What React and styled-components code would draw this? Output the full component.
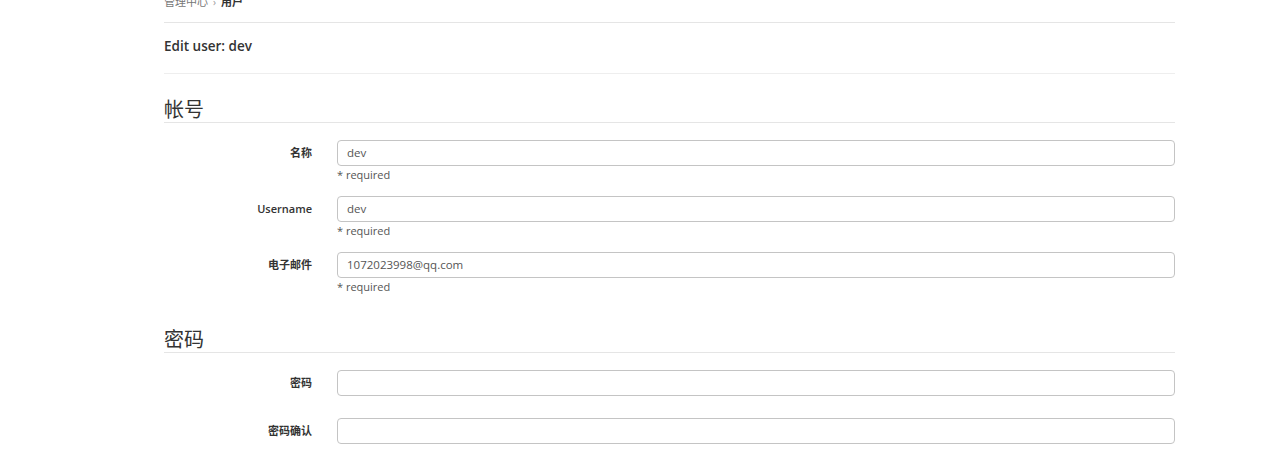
import React from "react";
import styled, { createGlobalStyle } from "styled-components";

const Global = createGlobalStyle`
  html, body { margin: 0; padding: 0; background: #fff; overflow: hidden; }
  body { font-family: "Open Sans", "Noto Sans CJK SC", sans-serif; color: #333; }
`;

const Page = styled.div`
  width: 1011px;
  margin-left: 164px;
`;

const Breadcrumb = styled.div`
  display: flex;
  align-items: center;
  gap: 5px;
  font-size: 11px;
  line-height: 16px;
  margin-top: -6px;
  padding-bottom: 12px;
  border-bottom: 1px solid #e5e5e5;
  color: #777;
`;

const Crumb = styled.span`
  color: ${(p) => (p.$active ? "#333" : "#777")};
  font-weight: ${(p) => (p.$active ? 700 : 400)};
`;

const Sep = styled.span`
  color: #999;
  font-size: 10px;
`;

const Header = styled.div`
  padding: 14px 0 18px;
  font-size: 13.5px;
  font-weight: 600;
  line-height: 18px;
  color: #333;
  border-bottom: 1px solid #eee;
`;

const SectionTitle = styled.h3`
  margin: ${(p) => p.$mt}px 0 0;
  font-size: 20px;
  font-weight: 400;
  line-height: 24px;
  color: #333;
  border-bottom: 1px solid #e5e5e5;
`;

const Form = styled.div`
  display: flex;
  flex-direction: column;
  gap: ${(p) => p.$gap}px;
  padding-top: 17px;
`;

const Row = styled.div`
  display: grid;
  grid-template-columns: 148px 1fr;
  column-gap: 25px;
  align-items: start;
`;

const Label = styled.label`
  text-align: right;
  font-size: 11px;
  font-weight: 600;
  line-height: 26px;
  color: #333;
`;

const Field = styled.div`
  display: flex;
  flex-direction: column;
`;

const Input = styled.div`
  box-sizing: border-box;
  height: 26px;
  border: 1px solid #c4c4c4;
  border-radius: 4px;
  padding: 0 9px;
  font-size: 11.5px;
  line-height: 24px;
  color: #555;
`;

const Help = styled.div`
  margin-top: 1px;
  font-size: 11px;
  line-height: 16px;
  color: #555;
`;

export default function App() {
  const account = [
    { label: "名称", value: "dev" },
    { label: "Username", value: "dev" },
    { label: "电子邮件", value: "1072023998@qq.com" },
  ];
  const pwd = ["密码", "密码确认"];
  return (
    <>
      <Global />
      <Page>
        <Breadcrumb>
          <Crumb>管理中心</Crumb>
          <Sep>›</Sep>
          <Crumb $active>用户</Crumb>
        </Breadcrumb>
        <Header>Edit user: dev</Header>
        <SectionTitle $mt={24}>帐号</SectionTitle>
        <Form $gap={13}>
          {account.map((f) => (
            <Row key={f.label}>
              <Label>{f.label}</Label>
              <Field>
                <Input>{f.value}</Input>
                <Help>* required</Help>
              </Field>
            </Row>
          ))}
        </Form>
        <SectionTitle $mt={33}>密码</SectionTitle>
        <Form $gap={22}>
          {pwd.map((l) => (
            <Row key={l}>
              <Label>{l}</Label>
              <Field>
                <Input />
              </Field>
            </Row>
          ))}
        </Form>
      </Page>
    </>
  );
}
